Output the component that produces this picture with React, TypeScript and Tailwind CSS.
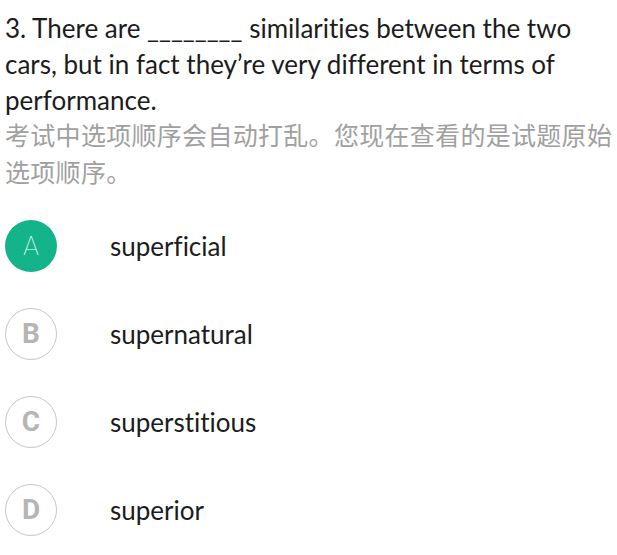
import React from "react";

const options = [
  { key: "A", text: "superficial", active: true },
  { key: "B", text: "supernatural", active: false },
  { key: "C", text: "superstitious", active: false },
  { key: "D", text: "superior", active: false },
];

export default function App() {
  return (
    <div className="w-[617px] h-[555px] bg-white overflow-hidden pl-[5px] pr-[4px] pt-[10px] [font-variant-ligatures:none]" style={{ fontFamily: "Lato, 'Noto Sans CJK SC', sans-serif" }}>
      <p className="text-[26px] leading-[36px] text-[#1c1c1c]">
        3. There are ________ similarities between the two cars, but in fact they’re very different in terms of performance.
      </p>
      <p className="text-[25px] leading-[37px] text-[#a0a0a0] tracking-[0.3px] mt-[-2px]" style={{ fontFamily: "'Noto Sans CJK SC', sans-serif" }}>
        考试中选项顺序会自动打乱。您现在查看的是试题原始选项顺序。
      </p>
      <div className="mt-[30px] flex flex-col gap-[36px]">
        {options.map((o) => (
          <div key={o.key} className="flex items-center">
            <div
              className={
                o.active
                  ? "w-[52px] h-[52px] rounded-full bg-[#13b489] text-white flex items-center justify-center text-[26px] font-thin"
                  : "w-[52px] h-[52px] rounded-full border-[1.5px] border-[#c8c8c8] text-[#b5b5b5] flex items-center justify-center text-[28px] font-bold"
              }
              style={{ fontFamily: "Roboto, sans-serif" }}
            >
              {o.key}
            </div>
            <span className="ml-[53px] text-[26px] text-[#1c1c1c]">{o.text}</span>
          </div>
        ))}
      </div>
    </div>
  );
}
